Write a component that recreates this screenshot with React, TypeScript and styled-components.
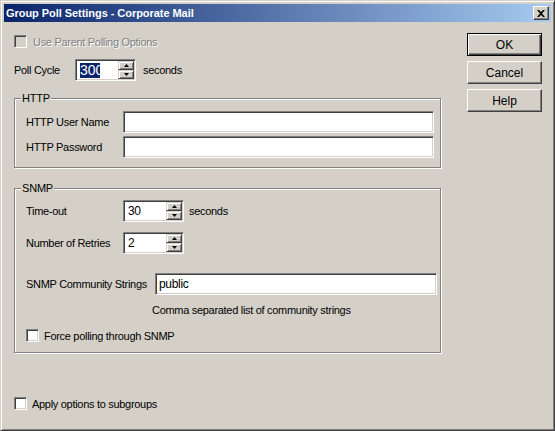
import React from "react";
import styled, { createGlobalStyle } from "styled-components";

const Global = createGlobalStyle`
  html, body { margin: 0; padding: 0; background: #d4d0c8; }
  body { font-family: "Liberation Sans", Arial, sans-serif; font-size: 11px; color: #000; }
  * { box-sizing: border-box; }
`;

const Window = styled.div`
  width: 555px;
  height: 431px;
  background: #d4d0c8;
  border: 1px solid;
  border-color: #d4d0c8 #404040 #404040 #d4d0c8;
  box-shadow: inset 1px 1px 0 #fff, inset -1px -1px 0 #808080;
  padding: 3px;
  display: flex;
  flex-direction: column;
`;

const TitleBar = styled.div`
  height: 18px;
  flex: none;
  display: flex;
  align-items: center;
  justify-content: space-between;
  padding: 0 2px 0 1px;
  background: linear-gradient(to right, #0a246a, #a6caf0);
`;

const TitleText = styled.span`
  color: #fff;
  font-weight: bold;
  font-size: 11px;
  letter-spacing: -0.05px;
  padding-left: 1px;
  white-space: nowrap;
`;

const CloseBtn = styled.div`
  width: 16px;
  height: 14px;
  background: #d4d0c8;
  border: 1px solid;
  border-color: #fff #404040 #404040 #fff;
  box-shadow: inset -1px -1px 0 #808080;
  display: flex;
  align-items: center;
  justify-content: center;
`;

const Client = styled.div`
  flex: 1;
  display: flex;
  padding: 0 0 0 10px;
`;

const Main = styled.div`
  width: 428px;
  display: flex;
  flex-direction: column;
`;

const Side = styled.div`
  display: flex;
  flex-direction: column;
  gap: 5px;
  margin-left: 25px;
  padding-top: 11px;
`;

const Button = styled.div<{ $default?: boolean }>`
  width: 75px;
  height: 23px;
  display: flex;
  align-items: center;
  justify-content: center;
  font-size: 12px;
  background: #d4d0c8;
  border: 1px solid;
  border-color: ${(p) => (p.$default ? "#000" : "#fff #404040 #404040 #fff")};
  box-shadow: ${(p) =>
    p.$default
      ? "inset 1px 1px 0 #fff, inset -1px -1px 0 #404040, inset -2px -2px 0 #808080"
      : "inset -1px -1px 0 #808080"};
`;

const Row = styled.div<{ $mt?: number; $ml?: number }>`
  display: flex;
  align-items: center;
  margin-top: ${(p) => p.$mt ?? 0}px;
  margin-left: ${(p) => p.$ml ?? 0}px;
`;

const CheckBox = styled.div<{ $disabled?: boolean }>`
  width: 13px;
  height: 13px;
  flex: none;
  border: 1px solid;
  border-color: #808080 #fff #fff #808080;
  box-shadow: inset 1px 1px 0 #404040, inset -1px -1px 0 #d4d0c8;
  background: ${(p) => (p.$disabled ? "#d4d0c8" : "#fff")};
`;

const Label = styled.span<{ $w?: number; $disabled?: boolean; $ml?: number }>`
  display: inline-block;
  font-size: 11px;
  letter-spacing: -0.3px;
  white-space: nowrap;
  width: ${(p) => (p.$w ? `${p.$w}px` : "auto")};
  margin-left: ${(p) => p.$ml ?? 0}px;
  color: ${(p) => (p.$disabled ? "#808080" : "#000")};
  text-shadow: ${(p) => (p.$disabled ? "1px 1px 0 #fff" : "none")};
`;

const TextBox = styled.div<{ $w: number }>`
  width: ${(p) => p.$w}px;
  height: 22px;
  flex: none;
  background: #fff;
  border: 1px solid;
  border-color: #808080 #fff #fff #808080;
  box-shadow: inset 1px 1px 0 #404040, inset -1px -1px 0 #d4d0c8;
  padding: 2px 3px;
  font-size: 12px;
  line-height: 16px;
  letter-spacing: -0.3px;
  display: flex;
  align-items: stretch;
`;

const SpinText = styled.div`
  flex: 1;
  padding: 1px 0 0 1px;
  font-size: 12px;
  line-height: 14px;
  overflow: hidden;
`;

const Selected = styled.span`
  display: inline-block;
  width: 20px;
  overflow: hidden;
  white-space: nowrap;
  background: #0a246a;
  color: #fff;
  font-size: 14px;
  line-height: 15px;
  letter-spacing: 0px;
`;

const SpinCol = styled.div`
  width: 16px;
  display: flex;
  flex-direction: column;
  margin: -1px -2px -1px 0;
`;

const SpinBtn = styled.div`
  flex: 1;
  background: #d4d0c8;
  border: 1px solid;
  border-color: #d4d0c8 #404040 #404040 #d4d0c8;
  box-shadow: inset 1px 1px 0 #fff, inset -1px -1px 0 #808080;
  display: flex;
  align-items: center;
  justify-content: center;
`;

const Group = styled.div<{ $mt: number; $pt: number; $pb: number }>`
  position: relative;
  margin-top: ${(p) => p.$mt}px;
  width: 427px;
  border: 1px solid #808080;
  box-shadow: inset 1px 1px 0 #fff, 1px 1px 0 #fff;
  padding: ${(p) => p.$pt}px 0 ${(p) => p.$pb}px 11px;
  display: flex;
  flex-direction: column;
`;

const Legend = styled.span`
  position: absolute;
  top: -7px;
  left: 6px;
  padding: 0 1px 0 1px;
  background: #d4d0c8;
  font-size: 11px;
  line-height: 13px;
  letter-spacing: -0.2px;
`;

const Hint = styled.div`
  margin: 9px 0 0 126px;
  font-size: 11px;
  line-height: 13px;
  letter-spacing: -0.3px;
`;

const Arrow = ({ down }: { down?: boolean }) => (
  <svg width="5" height="3" viewBox="0 0 5 3" style={{ display: "block" }}>
    <path d={down ? "M0 0h5L2.5 3z" : "M2.5 0L5 3H0z"} fill="#000" />
  </svg>
);

const Spinner = ({ value, selected }: { value: string; selected?: boolean }) => (
  <TextBox $w={61}>
    <SpinText>{selected ? <Selected>{value}</Selected> : value}</SpinText>
    <SpinCol>
      <SpinBtn>
        <Arrow />
      </SpinBtn>
      <SpinBtn>
        <Arrow down />
      </SpinBtn>
    </SpinCol>
  </TextBox>
);

export default function App() {
  return (
    <>
      <Global />
      <Window>
        <TitleBar>
          <TitleText>Group Poll Settings - Corporate Mail</TitleText>
          <CloseBtn>
            <svg width="8" height="7" viewBox="0 0 8 7">
              <path d="M0 0h2l2 2 2-2h2L5 3.5 8 7H6L4 5 2 7H0l3-3.5z" fill="#000" />
            </svg>
          </CloseBtn>
        </TitleBar>
        <Client>
          <Main>
            <Row $mt={13}>
              <CheckBox $disabled />
              <Label $disabled $ml={6}>Use Parent Polling Options</Label>
            </Row>
            <Row $mt={11}>
              <Label $w={61}>Poll Cycle</Label>
              <Spinner value="300" selected />
              <Label $ml={7}>seconds</Label>
            </Row>
            <Group $mt={17} $pt={12} $pb={9}>
              <Legend>HTTP</Legend>
              <Row>
                <Label $w={97}>HTTP User Name</Label>
                <TextBox $w={311} />
              </Row>
              <Row $mt={3}>
                <Label $w={97}>HTTP Password</Label>
                <TextBox $w={311} />
              </Row>
            </Group>
            <Group $mt={20} $pt={11} $pb={10}>
              <Legend>SNMP</Legend>
              <Row>
                <Label $w={97}>Time-out</Label>
                <Spinner value="30" />
                <Label $ml={5}>seconds</Label>
              </Row>
              <Row $mt={10}>
                <Label $w={97}>Number of Retries</Label>
                <Spinner value="2" />
              </Row>
              <Row $mt={19}>
                <Label $w={129}>SNMP Community Strings</Label>
                <TextBox $w={282}>public</TextBox>
              </Row>
              <Hint>Comma separated list of community strings</Hint>
              <Row $mt={12}>
                <CheckBox />
                <Label $ml={5}>Force polling through SNMP</Label>
              </Row>
            </Group>
            <Row $mt={44}>
              <CheckBox />
              <Label $ml={5}>Apply options to subgroups</Label>
            </Row>
          </Main>
          <Side>
            <Button $default>OK</Button>
            <Button>Cancel</Button>
            <Button>Help</Button>
          </Side>
        </Client>
      </Window>
    </>
  );
}
